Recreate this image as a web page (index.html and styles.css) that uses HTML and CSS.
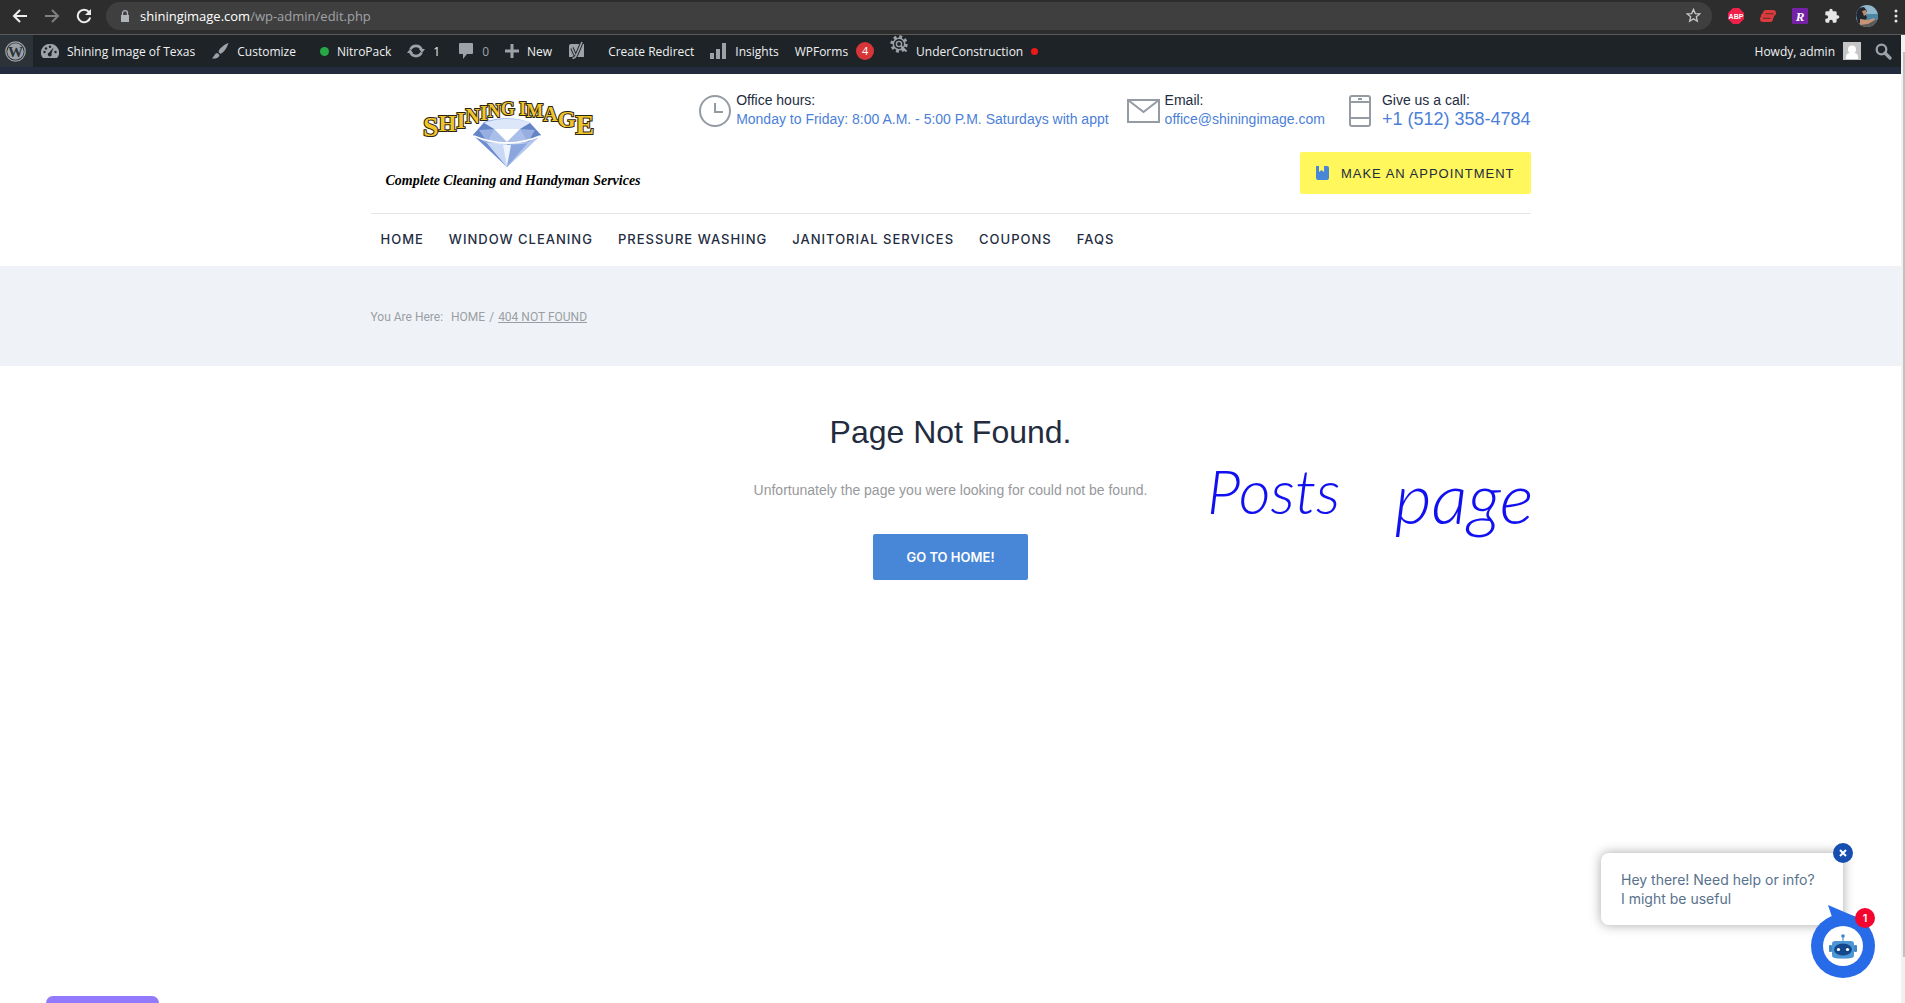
FILE: index.html
```html
<!DOCTYPE html>
<html lang="en">
<head>
<meta charset="utf-8">
<title>Page not found - Shining Image of Texas</title>
<link rel="stylesheet" href="styles.css">
</head>
<body>
<div class="browser">
  <button class="tool" aria-label="Back"><svg width="16" height="16" viewBox="0 0 16 16"><path d="M15 8H2M8 2L2 8l6 6" fill="none" stroke="#eee" stroke-width="2"/></svg></button>
  <button class="tool" aria-label="Forward"><svg width="16" height="16" viewBox="0 0 16 16"><path d="M1 8h13M8 2l6 6-6 6" fill="none" stroke="#808080" stroke-width="2"/></svg></button>
  <button class="tool" aria-label="Reload"><svg width="16" height="16" viewBox="0 0 16 16"><path d="M13 4A6.300 6.300 0 1 0 14.200 9.500" fill="none" stroke="#eee" stroke-width="2"/><path d="M15 1v6H9z" fill="#eee"/></svg></button>
  <div class="address">
    <svg width="10" height="12" viewBox="0 0 10 12"><path d="M1 5h8v7H1z" fill="#b0b3b8"/><path d="M2.500 5V3.200a2.500 2.500 0 0 1 5 0V5" fill="none" stroke="#b0b3b8" stroke-width="1.300"/></svg>
    <span class="url"><b>shiningimage.com</b>/wp-admin/edit.php</span>
    <svg class="star" width="15" height="15" viewBox="0 0 16 16"><path d="M8 1.500l1.900 4.400 4.700.4-3.600 3.100 1.100 4.700L8 11.600l-4.100 2.500L5 9.400 1.400 6.300l4.700-.4z" fill="none" stroke="#c8c8c8" stroke-width="1.400"/></svg>
  </div>
  <div class="extensions">
    <svg width="16" height="16" viewBox="0 0 16 16"><path d="M5 0h6l5 5v6l-5 5H5l-5-5V5z" fill="#f0204a"/><text x="8" y="11" text-anchor="middle" class="abp">ABP</text></svg>
    <svg width="16" height="14" viewBox="0 0 16 14"><rect x="3" y="1" width="13" height="6" rx="3" fill="#dc3a3c"/><rect x="0" y="7" width="13" height="6" rx="3" fill="#dc3a3c"/><rect x="1" y="4" width="13" height="6" rx="3" fill="#dc3a3c"/><path d="M5.500 4.800h8M3 9.200h7.500" stroke="#2d2d2d" stroke-width=".8"/></svg>
    <svg width="16" height="16" viewBox="0 0 16 16"><rect width="16" height="16" rx="1" fill="#7620a8"/><text x="8" y="13" text-anchor="middle" class="rak">R</text></svg>
    <svg width="16" height="16" viewBox="0 0 24 24"><path d="M20.500 11H19V7a2 2 0 0 0-2-2h-4V3.500a2.500 2.500 0 0 0-5 0V5H4a2 2 0 0 0-2 2v3.800h1.500a2.700 2.700 0 0 1 0 5.400H2V20a2 2 0 0 0 2 2h3.800v-1.500a2.700 2.700 0 0 1 5.400 0V22H17a2 2 0 0 0 2-2v-4h1.500a2.500 2.500 0 0 0 0-5z" fill="#e6e6e6"/></svg>
    <svg width="22" height="22" viewBox="0 0 22 22"><clipPath id="face"><circle cx="11" cy="11" r="11"/></clipPath><g clip-path="url(#face)"><rect width="22" height="22" fill="#8fb8cc"/><path d="M0 9h22v6H0z" fill="#4b86a3"/><path d="M0 15h22v7H0z" fill="#5c5a58"/><path d="M2 3l6-1 3 4-2 3 2 3-2 6H2L0 9z" fill="#22262e"/><path d="M6 6l4-1 1 4-3 2z" fill="#c08a6e"/><path d="M4 14l8 1 6-2 1 2-7 4-8 1z" fill="#c89478"/></g></svg>
    <svg width="4" height="14" viewBox="0 0 4 14"><g fill="#e6e6e6"><circle cx="2" cy="2" r="1.500"/><circle cx="2" cy="7" r="1.500"/><circle cx="2" cy="12" r="1.500"/></g></svg>
  </div>
</div>
<div class="viewport">
<div class="site">
  <nav class="adminbar" aria-label="Toolbar">
    <a class="wp" href="#" aria-label="About WordPress"><svg width="21" height="21" viewBox="0 0 21 21"><circle cx="10.500" cy="10.500" r="9.700" fill="none" stroke="#9ca2a7" stroke-width="1.300"/><circle cx="10.500" cy="10.500" r="8.200" fill="#9ca2a7"/><text x="10.500" y="15.500" text-anchor="middle" class="wpmark">W</text></svg></a>
    <a class="item" href="#"><svg width="18" height="16" viewBox="0 0 18 16"><path d="M9 1a8.500 8.500 0 0 0-7 14h14A8.500 8.500 0 0 0 9 1z" fill="#9ca2a7"/><g fill="#1d2327"><circle cx="3.500" cy="9" r="1.200"/><circle cx="5" cy="5.500" r="1.200"/><circle cx="9" cy="3.700" r="1.200"/><circle cx="14.500" cy="9" r="1.200"/><path d="M12.500 4.500l-2 6a2 2 0 1 1-2.300-1z"/></g></svg>Shining Image of Texas</a>
    <a class="item" href="#"><svg width="18" height="18" viewBox="0 0 18 18"><path d="M17.500 1C12 3 8 7 7.500 10l2 2C13 10 16 6 17.500 1zM6.500 11C4 11 3.500 14 1 16.500c3.500.5 7-.5 7.500-3.500z" fill="#9ca2a7"/></svg>Customize</a>
    <a class="item nitro" href="#"><i class="dot green"></i>NitroPack</a>
    <a class="item" href="#"><svg width="18" height="16" viewBox="0 0 18 16"><path d="M3.500 6.500a6 6 0 0 1 11 0M14.500 9.500a6 6 0 0 1-11 0" fill="none" stroke="#9ca2a7" stroke-width="2.600"/><path d="M12 6h6l-3 4zM0 10h6L3 6z" fill="#9ca2a7"/></svg>1</a>
    <a class="item comments" href="#"><svg width="16" height="17" viewBox="0 0 16 17"><path d="M2 0h12a1 1 0 0 1 1 1v9a1 1 0 0 1-1 1H9l-4 5v-5H2a1 1 0 0 1-1-1V1a1 1 0 0 1 1-1z" fill="#9ca2a7"/></svg>0</a>
    <a class="item" href="#"><svg width="14" height="14" viewBox="0 0 14 14"><path d="M7 0v14M0 7h14" stroke="#9ca2a7" stroke-width="3"/></svg>New</a>
    <a class="item yoast" href="#" aria-label="SEO"><svg width="18" height="20" viewBox="0 0 18 20"><path d="M3 3h13v13H1V5a2 2 0 0 1 2-2z" fill="#9ca2a7"/><path d="M4 7l3 7M14 1L8.500 14q-1 3-4 3.500" fill="none" stroke="#1d2327" stroke-width="3.400"/><path d="M4 7l3 7M14 1L8.500 14q-1 3-4 3.500" fill="none" stroke="#9ca2a7" stroke-width="1.600"/></svg></a>
    <a class="item" href="#">Create Redirect</a>
    <a class="item" href="#"><svg width="17" height="16" viewBox="0 0 17 16"><path d="M0 10h4v6H0zM6 6h4v10H6zM12 0h4v16h-4z" fill="#9ca2a7"/></svg>Insights</a>
    <a class="item" href="#">WPForms<span class="count">4</span></a>
    <a class="item under" href="#"><svg class="gear" width="18" height="18" viewBox="0 0 18 18"><circle cx="9" cy="9" r="7" fill="none" stroke="#9ca2a7" stroke-width="3.400" stroke-dasharray="2.800 2.700"/><circle cx="9" cy="9" r="5.700" fill="none" stroke="#9ca2a7" stroke-width="1.500"/><circle cx="9" cy="9" r="2.600" fill="none" stroke="#9ca2a7" stroke-width="1.400"/><path d="M11 11l5.500 5.500" stroke="#9ca2a7" stroke-width="2"/></svg>UnderConstruction<i class="dot red"></i></a>
    <a class="item account" href="#">Howdy, admin<svg width="18" height="18" viewBox="0 0 18 18"><path d="M0 0h18v18H0z" fill="#c6c6c6"/><circle cx="9" cy="7.500" r="4" fill="#fff"/><path d="M3 17v-2q0-4 4-4h4q4 0 4 4v2z" fill="#fff"/></svg></a>
    <button class="search" aria-label="Search"><svg width="17" height="17" viewBox="0 0 17 17"><circle cx="6.500" cy="6.500" r="4.800" fill="none" stroke="#9ca2a7" stroke-width="2.300"/><path d="M10 10l5 5" stroke="#9ca2a7" stroke-width="3.200" stroke-linecap="round"/></svg></button>
  </nav>
  <header class="masthead">
    <div class="wrap">
      <div class="top">
        <a class="logo" href="#"><svg width="284" height="116" viewBox="0 0 284 116" role="img" aria-label="Shining Image">
          <defs><linearGradient id="gem" x1="0" y1="0" x2="1" y2="1"><stop offset="0" stop-color="#7d9bd8"/><stop offset=".5" stop-color="#dfe9fb"/><stop offset="1" stop-color="#5878c4"/></linearGradient></defs>
          <text class="brand" x="52"><tspan y="56" class="s28">S</tspan><tspan y="51" class="s23">H</tspan><tspan y="48" class="s23">I</tspan><tspan y="43" class="s20">N</tspan><tspan y="40" class="s20">I</tspan><tspan y="37" class="s18">N</tspan><tspan y="35" class="s18">G </tspan><tspan y="35" class="s18">I</tspan><tspan y="37" class="s18">M</tspan><tspan y="41" class="s20">A</tspan><tspan y="47" class="s23">G</tspan><tspan y="54" class="s28">E</tspan></text>
          <path d="M113 42q23-8 46 0l11 13-34 32-34-32z" fill="url(#gem)"/>
          <path d="M113 43q23-8 46 0l-10 6h-26z" fill="#dce7fa"/>
          <path d="M102 55l11-12 10 6-7 13zM170 55l-11-12-10 6 8 13z" fill="#6584c8"/>
          <path d="M108 50l15-1-7 13zM164 50l-15-1 8 13z" fill="#96aee0"/>
          <path d="M123 49h26l-13 13z" fill="#fff"/><path d="M123 49l13 13-20 1zM149 49l-13 13 21 1z" fill="#a9bee8"/>
          <path d="M102 55l14 8 20 24z" fill="#6f8ed1"/><path d="M116 63q10 2 20 1v23z" fill="#c9d8f5"/><path d="M136 64q11 1 21-1l-21 24z" fill="#8ba6df"/><path d="M170 55l-13 8-21 24z" fill="#b4c7ef"/><path d="M132 65h8l-4 21z" fill="#eef4ff"/>
          <path d="M103 56q33 14 66 0" fill="none" stroke="#fff" stroke-width="1.500"/>
          <text class="tagline" x="142" y="105" text-anchor="middle">Complete Cleaning and Handyman Services</text>
        </svg></a>
        <div class="info">
          <div class="contacts">
            <div class="contact"><svg width="32" height="32" viewBox="0 0 32 32"><g fill="none" stroke="#949ba3" stroke-width="2"><circle cx="16" cy="16" r="15"/><path d="M16 8v9h8"/></g></svg><p>Office hours:<br><a href="#">Monday to Friday: 8:00 A.M. - 5:00 P.M. Saturdays with appt</a></p></div>
            <div class="contact"><svg width="33" height="32" viewBox="0 0 33 32"><path d="M1 5h31v22H1zl15.500 12L32 5" fill="none" stroke="#949ba3" stroke-width="2"/></svg><p>Email:<br><a href="#">office@shiningimage.com</a></p></div>
            <div class="contact call"><svg width="22" height="32" viewBox="0 0 22 32"><g fill="none" stroke="#949ba3" stroke-width="2"><rect x="1" y="1" width="20" height="30" rx="2"/><path d="M1 7h20M1 23h20M9 4h4"/></g></svg><p>Give us a call:<br><a href="#">+1 (512) 358-4784</a></p></div>
          </div>
          <button class="appointment"><svg width="13" height="14" viewBox="0 0 13 14"><path d="M2 0h1v6l2.500-2L8 6V0h3a2 2 0 0 1 2 2v10a2 2 0 0 1-2 2H2a2 2 0 0 1-2-2V0z" fill="#4886d8"/></svg>MAKE AN APPOINTMENT</button>
        </div>
      </div>
      <nav class="menu" aria-label="Main">
        <a href="#">HOME</a><a href="#">WINDOW CLEANING</a><a href="#">PRESSURE WASHING</a><a href="#">JANITORIAL SERVICES</a><a href="#">COUPONS</a><a href="#">FAQS</a>
      </nav>
    </div>
  </header>
  <div class="crumbs"><div class="wrap"><span class="here">You Are Here:</span><a href="#">HOME</a><span>/</span><a class="current" href="#">404 NOT FOUND</a></div></div>
  <main class="missing">
    <h1>Page Not Found.</h1>
    <p>Unfortunately the page you were looking for could not be found.</p>
    <button class="home">GO TO HOME!</button>
  </main>
  <div class="note"><span class="first">Posts</span><span class="second">page</span></div>
  <div class="tab"></div>
  <aside class="chat">
    <p>Hey there! Need help or info?<br>I might be useful</p>
    <button class="close" aria-label="Close"><svg width="8" height="8" viewBox="0 0 8 8"><path d="M1 1l6 6M7 1L1 7" stroke="#fff" stroke-width="2"/></svg></button>
    <button class="bot" aria-label="Open chat"><svg width="64" height="74" viewBox="0 0 64 74"><path d="M17 1l28 12-23 3z" fill="#276be8"/><circle cx="32" cy="42" r="32" fill="#276be8"/><circle cx="32" cy="42" r="20" fill="#fff"/><path d="M31.500 33h1v5h-1z" fill="#3d86c6"/><circle cx="32" cy="32" r="1.800" fill="#3d86c6"/><rect x="18" y="41" width="3" height="7" rx="1" fill="#3d86c6"/><rect x="43" y="41" width="3" height="7" rx="1" fill="#3d86c6"/><rect x="21" y="37" width="22" height="17" rx="3" fill="#4d96d4"/><path d="M24 54h16l-3 1H27z" fill="#9cc4e6"/><ellipse cx="32" cy="45.500" rx="9" ry="6" fill="#14488c"/><circle cx="27.500" cy="45.500" r="1.600" fill="#fff"/><circle cx="36.500" cy="45.500" r="1.600" fill="#fff"/></svg></button>
    <span class="unread">1</span>
  </aside>
</div>
<div class="scrollbar"><div class="thumb"></div></div>
</div>
</body>
</html>
```
FILE: styles.css
```css
* { box-sizing: border-box; }
body { margin: 0; min-height: 100vh; display: flex; flex-direction: column; background: #fff; font-family: "Liberation Sans", Arial, sans-serif; font-size: 14px; color: #232c3f; }
button { border: 0; background: none; padding: 0; font: inherit; color: inherit; display: flex; align-items: center; justify-content: center; }
a { color: inherit; text-decoration: none; }
p, h1 { margin: 0; }
svg { display: block; flex: none; }

.browser { height: 35px; padding: 0 7px 3px 12px; display: flex; align-items: center; gap: 16px; background: #2d2d2d; border-bottom: 1px solid #5a5a5a; font-family: "Open Sans", sans-serif; }
.address { flex: 1; height: 28px; margin-left: -2px; padding: 0 11px 0 14px; border-radius: 14px; background: #3f3f3f; display: flex; align-items: center; gap: 10px; }
.url { flex: 1; font-size: 13px; color: #a0a3a7; }
.url b { font-weight: 400; color: #fff; }
.extensions { display: flex; align-items: center; gap: 16px; }
.abp { font: bold 7px "Liberation Sans", sans-serif; fill: #fff; }
.rak { font: italic bold 13px "Liberation Serif", serif; fill: #fff; }

.viewport { flex: 1; display: flex; }
.site { flex: 1; position: relative; min-width: 0; }
.scrollbar { width: 4px; padding: 17px 0 46px 2px; background: #f1f1f1; display: flex; }
.thumb { flex: 1; background: #c1c1c1; }

.adminbar { height: 32px; display: flex; align-items: center; background: #1d2327; color: #f0f0f1; font: 12px "Open Sans", sans-serif; white-space: nowrap; }
.wp { width: 33px; height: 32px; padding-right: 3px; display: flex; align-items: center; justify-content: center; background: #2c3338; }
.wpmark { font: bold 15px "Liberation Serif", serif; fill: #2c3338; }
.item { display: flex; align-items: center; gap: 8px; padding: 0 8px; }
.dot { width: 7px; height: 7px; border-radius: 50%; background: #f01818; }
.green { width: 9px; height: 9px; background: #28a745; }
.nitro { padding-left: 16px; }
.comments { color: #9ca2a7; padding-left: 10px; }
.yoast { padding-right: 14px; }
.count { min-width: 18px; height: 18px; border-radius: 9px; background: #d63638; color: #fff; font-size: 11px; line-height: 18px; text-align: center; }
.gear { align-self: flex-start; }
.under { height: 32px; }
.account { margin-left: auto; padding-right: 4px; }
.search { width: 36px; height: 32px; }

.masthead { border-top: 7px solid #232c3f; }
.wrap { max-width: 1160px; margin: 0 auto; }
.top { display: flex; justify-content: space-between; height: 140px; padding-top: 6px; border-bottom: 1px solid #e4e6e8; }
.info { display: flex; flex-direction: column; align-items: flex-end; gap: 22px; padding-top: 11px; }
.contacts { display: flex; gap: 18px; }
.contact { display: flex; align-items: flex-start; gap: 5px; line-height: 19px; white-space: nowrap; }
.contact svg { margin-top: 4px; }
.contact a { color: #4b7fd8; }
.call { gap: 11px; margin-left: 6px; }
.call a { font-size: 18px; }
.appointment { height: 42px; padding: 0 16px; gap: 12px; border-radius: 2px; background: #fff75c; font-size: 13px; letter-spacing: 1px; }
.brand { font-family: "Liberation Serif", serif; font-weight: bold; fill: #f2c42c; stroke: #2a2413; stroke-width: 2px; paint-order: stroke; }
.s28 { font-size: 28px; }
.s23 { font-size: 23px; }
.s20 { font-size: 20px; }
.s18 { font-size: 18px; }
.tagline { font: italic bold 14px "Liberation Serif", serif; }
.menu { display: flex; gap: 25px; padding: 0 10px; height: 52px; padding-bottom: 2px; align-items: center; font: 500 13px Inter, sans-serif; letter-spacing: 1px; }

.crumbs { background: #eff3f7; height: 100px; padding-top: 2px; display: flex; align-items: center; font: 12px Roboto, sans-serif; color: #9a9ea3; }
.crumbs .wrap { flex: 1; display: flex; gap: 4px; }
.here { margin-right: 4px; }
.current { text-decoration: underline; }

.missing { display: flex; flex-direction: column; align-items: center; padding: 46px 0; }
.missing h1 { font-size: 32px; font-weight: 400; line-height: 40px; }
.missing p { margin-top: 28px; line-height: 20px; color: #97999c; }
.home { margin-top: 34px; min-width: 155px; height: 46px; padding: 0 30px; border-radius: 2px; background: #4886d8; color: #fff; font: 600 13px Inter, sans-serif; }

.note { position: absolute; left: 1207px; top: 420px; display: flex; gap: 54px; color: #1010f0; font-family: Lato, sans-serif; font-style: italic; font-weight: 300; line-height: 70px; }
.first { font-size: 62px; }
.second { font-size: 72px; padding-top: 6px; }

.tab { position: absolute; left: 46px; bottom: 0; width: 113px; height: 7px; border-radius: 7px 7px 0 0; background: #937afc; }

.chat { position: absolute; right: 58px; bottom: 78px; width: 242px; height: 72px; padding: 17px 20px; border-radius: 8px; background: #fff; box-shadow: 0 0 12px rgba(0, 0, 0, .35); color: #58728c; font: 14px Inter, sans-serif; line-height: 19px; white-space: nowrap; }
.close { position: absolute; right: -10px; top: -10px; width: 20px; height: 20px; border-radius: 50%; background: #164fb0; }
.bot { position: absolute; right: -32px; top: 51px; }
.unread { position: absolute; right: -32px; top: 55px; width: 20px; height: 20px; border-radius: 50%; background: #f4042f; color: #fff; font-size: 11px; font-weight: 600; line-height: 20px; text-align: center; }
```
